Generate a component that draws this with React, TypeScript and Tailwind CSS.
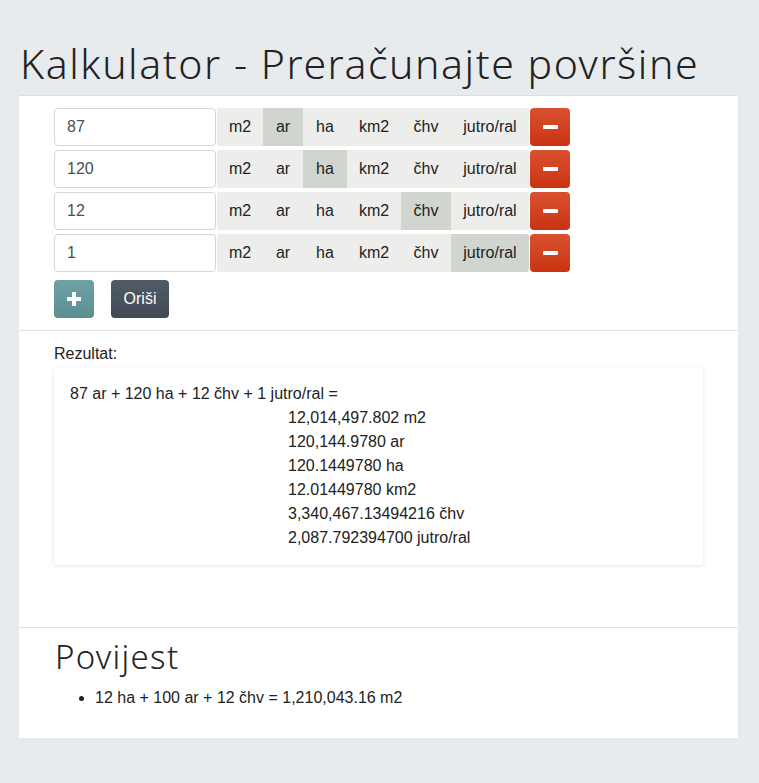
import { useState } from "react";

const UNITS = ["m2", "ar", "ha", "km2", "čhv", "jutro/ral"];
const SEG_W = ["w-[46px]", "w-[40px]", "w-[44px]", "w-[54px]", "w-[50px]", "w-[78px]"];

const initialRows = [
  { value: "87", unit: 1 },
  { value: "120", unit: 2 },
  { value: "12", unit: 4 },
  { value: "1", unit: 5 },
];

const results = [
  "12,014,497.802 m2",
  "120,144.9780 ar",
  "120.1449780 ha",
  "12.01449780 km2",
  "3,340,467.13494216 čhv",
  "2,087.792394700 jutro/ral",
];

const App = () => {
  const [rows, setRows] = useState(initialRows);

  return (
    <div className="min-h-screen bg-[#e8ebee] font-['Liberation_Sans',Arial,sans-serif] text-[#222]">
      <div className="pl-[19px] pr-[21px] pt-[38px] pb-[45px] w-[759px]">
        <h1 className="font-['Noto_Sans',sans-serif] font-light text-[41px] leading-[50px] tracking-[1.55px] text-[#222] pl-[1px] mb-[7px]">
          Kalkulator - Preračunajte površine
        </h1>

        <div className="bg-white border-t border-[#dadde0]">
          <div className="px-[35px] pt-[12px] pb-[12px]">
            <div className="flex flex-col gap-[4px]">
              {rows.map((row, i) => (
                <div key={i} className="flex h-[38px]">
                  <input
                    value={row.value}
                    onChange={(e) => {
                      const next = [...rows];
                      next[i] = { ...row, value: e.target.value };
                      setRows(next);
                    }}
                    className="w-[162px] h-[38px] border border-[#d3d6da] rounded-[4px] px-[12px] text-[16px] text-[#495057] outline-none"
                  />
                  <div className="flex ml-[1px] rounded-[3px] overflow-hidden bg-[#edeeeb]">
                    {UNITS.map((u, j) => (
                      <button
                        key={u}
                        onClick={() => {
                          const next = [...rows];
                          next[i] = { ...row, unit: j };
                          setRows(next);
                        }}
                        className={`${SEG_W[j]} h-[38px] text-[16px] text-[#222] ${
                          j === row.unit ? "bg-[#d1d5d0]" : "bg-[#edeeeb]"
                        }`}
                      >
                        {u}
                      </button>
                    ))}
                  </div>
                  <button
                    onClick={() => setRows(rows.filter((_, k) => k !== i))}
                    className="ml-[1px] w-[40px] h-[38px] rounded-[4px] bg-gradient-to-b from-[#d9512f] to-[#cb3210] flex items-center justify-center"
                  >
                    <span className="block w-[15px] h-[4px] bg-white rounded-[1px]" />
                  </button>
                </div>
              ))}
            </div>

            <div className="flex gap-[17px] mt-[8px]">
              <button
                onClick={() => setRows([...rows, { value: "", unit: 0 }])}
                className="w-[40px] h-[38px] rounded-[4px] bg-gradient-to-b from-[#6ea1a3] to-[#5b8f92] flex items-center justify-center"
              >
                <svg width="14" height="14" viewBox="0 0 14 14">
                  <rect x="5" y="0" width="4" height="14" fill="white" />
                  <rect x="0" y="5" width="14" height="4" fill="white" />
                </svg>
              </button>
              <button className="w-[58px] h-[38px] rounded-[4px] bg-gradient-to-b from-[#505b66] to-[#414b55] text-white text-[16px]">
                Oriši
              </button>
            </div>
          </div>

          <div className="border-t border-[#dfe1e3] px-[35px] pt-[14px] pb-[62px]">
            <div className="text-[16px] leading-[18px] mb-[4px]">Rezultat:</div>
            <div className="rounded-[4px] shadow-[0_1px_4px_rgba(0,0,0,0.12)] bg-white pl-[16px] pt-[15px] pb-[15px] text-[16px] leading-[24px] text-[#222]">
              <div>87 ar + 120 ha + 12 čhv + 1 jutro/ral =</div>
              <div className="pl-[218px]">
                {results.map((r) => (
                  <div key={r}>{r}</div>
                ))}
              </div>
            </div>
          </div>

          <div className="border-t border-[#dfe1e3] px-[36px] pt-[9px] pb-[29px]">
            <h2 className="font-['Noto_Sans',sans-serif] font-light text-[33px] leading-[40px] tracking-[1.3px] text-[#222] mb-[10px]">
              Povijest
            </h2>
            <ul className="list-disc pl-[40px] text-[16px] leading-[22px]">
              <li>12 ha + 100 ar + 12 čhv = 1,210,043.16 m2</li>
            </ul>
          </div>
        </div>
      </div>
    </div>
  );
};

export default App;
